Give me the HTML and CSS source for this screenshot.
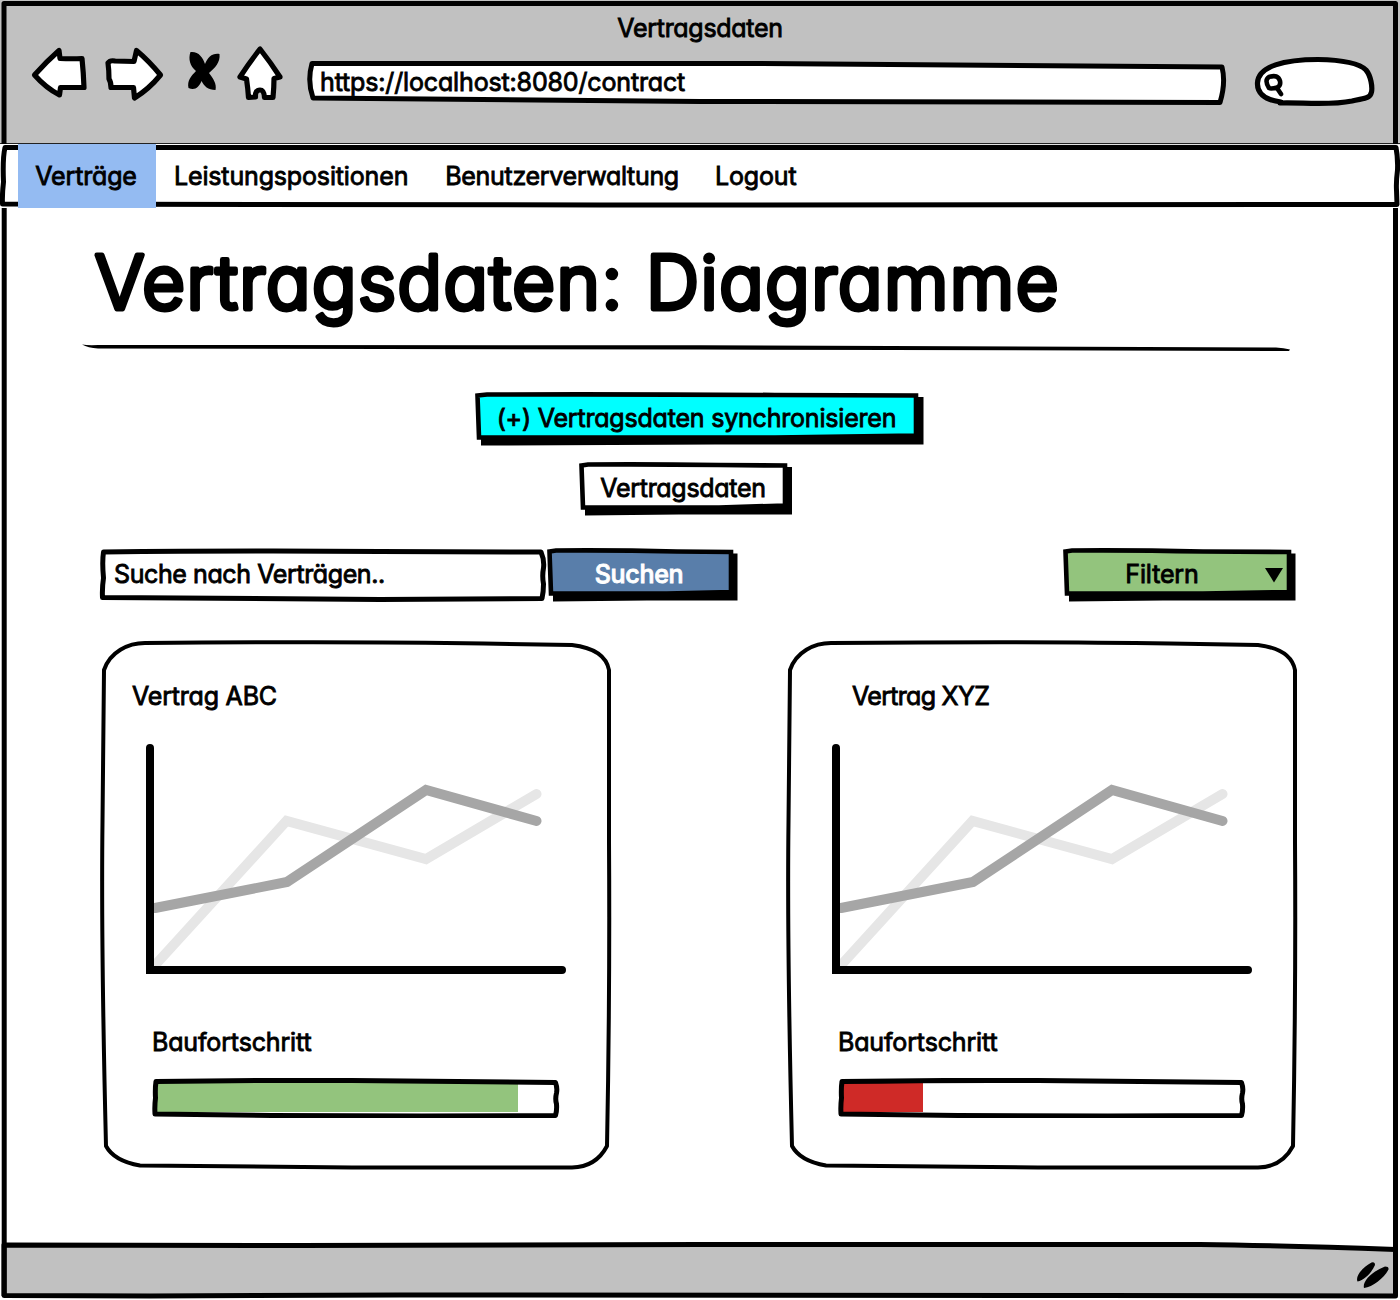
FILE: index.html
```html
<!DOCTYPE html>
<html lang="de">
<head>
<meta charset="utf-8">
<title>Vertragsdaten</title>
<link rel="stylesheet" href="styles.css">
</head>
<body>
<svg class="defs" aria-hidden="true">
  <symbol id="card-outline" viewBox="0 0 508 526" overflow="visible">
    <path class="line-card" d="M43 1 C150 0 300 0 382 1.500 L470 3 Q503 7 507 28 L507 200 Q508 350 505 504 Q494 525 470 525.500 L250 525.500 L38 523.500 Q12 519 4 504 Q-1 300 .5 180 L2 28 C8 10 26 1 43 1Z"/>
  </symbol>
  <symbol id="line-chart" viewBox="140 740 440 240">
    <path class="series series-light" d="M157 963 L286.500 821 L426 859 L536.500 794"/>
    <path class="series series-dark" d="M155 908 L287 882 L426 790 L536.500 821"/>
    <path class="axes" d="M150 748 V970 H562"/>
  </symbol>
  <symbol id="progress-outline" viewBox="0 0 408 40">
    <path class="line-thick" d="M4 3.500 Q110 2 200 2.500 L403.500 4.500 Q405.500 10 404.500 15 Q403 21 404.500 26 Q405 33 403.500 37.500 L270 38 L120 37.500 L3 36 Q2.500 28 3.500 20 Q3 10 4 3.500Z"/>
  </symbol>
</svg>

<div class="browser">
  <header class="chrome">
    <div class="window-title text">Vertragsdaten</div>
    <div class="toolbar">
      <svg width="66" height="62" viewBox="30 45 66 62"><path class="icon" d="M34.500 75 Q46 62 59 50.500 L60 58.500 Q72 59 82 58.500 Q83.500 73 84 87.500 Q72 87.500 60.500 87.500 L59.500 95 Q46 88 34.500 75Z"/></svg>
      <svg width="80" height="62" viewBox="96 45 80 62"><path class="icon" d="M108 63 Q110 60 115 61 L134 61.500 L136.500 50.500 Q149 61 160.500 75 Q149 89 134.500 98 L133.500 87.500 L111 87.500 Q111 82 109 79 Q109 70 108 63Z"/></svg>
      <svg width="54" height="62" viewBox="176 45 54 62"><path d="M190.500 52 C198 51 203 57 205 64 C208 57 212 53 219.500 54 C220.500 62 215 68 209 73 C213 78 217 84 215.500 90 C208 90 204 86 201.500 81 C199 87 195 91 188.500 88 C187 81 191 76 196 71 C190 66 188 59 190.500 52Z"/></svg>
      <svg width="70" height="62" viewBox="230 45 70 62"><path class="icon" d="M260 49 Q249 63 240 77 L246.500 79 Q248 89 248.500 97.500 L255.500 97 Q255 90 260 90 Q264 90 264.500 97.500 L273 97.500 Q274 87 274 78.500 L280 77 Q271 63 260 49Z"/></svg>
      <div class="address">
        <svg class="sketch" viewBox="300 45 940 62"><path class="line-thick fill-white" d="M312 63.500 Q540 62.500 760 63.500 L1222 67 Q1226 83 1220 102.500 L700 101.500 L313 98 Q307 81 312 63.500Z"/></svg>
        <span class="text address-text">https://localhost:8080/contract</span>
      </div>
      <svg width="150" height="62" viewBox="1240 45 150 62">
        <path class="icon" d="M1281 102 C1263 100 1257 92 1257.500 83 C1258 66 1285 59.500 1318 59.500 C1346 60 1360 64 1366 70 C1371 76 1372.500 87 1371.500 92 C1370 99 1364 98 1352 101 C1328 106 1300 102 1280 103"/>
        <path class="icon icon-glass" d="M1269 88 Q1264 80 1269 77 Q1278 74 1280 81 Q1281 86 1277 87.500 Q1271 89 1269 88Z M1277 88 L1281 94"/>
      </svg>
    </div>
  </header>

  <nav class="nav">
    <svg class="sketch" viewBox="0 144 1400 64">
      <path class="chrome-seam" d="M700 144.500 H1400"/>
      <path class="line-thick" d="M5 147.500 L500 147.500 L1396 147.500 Q1398 158 1397.500 170 Q1396 182 1396.500 190 L1397 204.500 L600 205 L2.500 204 Q2 195 3.500 182 Q2.500 158 5 147.500Z"/>
    </svg>
    <a class="text nav-item active">Verträge</a>
    <a class="text nav-item">Leistungspositionen</a>
    <a class="text nav-item tight">Benutzerverwaltung</a>
    <a class="text nav-item">Logout</a>
  </nav>

  <main class="content">
    <h1 class="headline"><svg width="1100" height="100" viewBox="90 240 1100 100" overflow="visible"><text class="headline-text" x="94.800" y="308.700">Vertragsdaten: Diagramme</text></svg></h1>
    <svg class="rule" width="1210" height="12" viewBox="82 341 1210 12"><path d="M82 344.500 Q88 345.500 98 345 L700 345.300 L1276 347.500 Q1284 348 1290 349.500 L1289 351 L1276 351 L700 349.500 L98 348.500 Q88 348 82 344.500Z"/></svg>

    <div class="actions">
      <button class="btn btn-sync">
        <svg class="sketch" viewBox="0 0 443 53"><path d="M6 12 V53.500 L240 52.500 H448.500 V5 H438Z"/><path class="line-btn fill-cyan" d="M2.500 3.500 L12 2.500 Q150 2 300 3 L441 3.500 V43.500 L300 45.500 L4 45.500Z"/></svg>
        <span class="text">(+) Vertragsdaten synchronisieren</span>
      </button>
      <button class="btn btn-data">
        <svg class="sketch" viewBox="0 0 208 53"><path d="M6 12 V53.500 L100 52.500 H213 V5 H202Z"/><path class="line-btn fill-white" d="M2.500 3.500 L9 2.500 Q70 2 140 3 L206 3.500 V43.500 L140 45.500 L4 45.500Z"/></svg>
        <span class="text">Vertragsdaten</span>
      </button>
    </div>

    <div class="search-row">
      <div class="field">
        <svg class="sketch" viewBox="0 0 446 53"><path class="line-thick fill-white" d="M3.500 4 Q150 2.500 280 3.500 L441 4 Q444.500 12 443.500 20 Q442 28 443.500 36 Q443.500 44 442 50.500 L280 51.500 L2.500 49.500 Q2 40 3.500 30 Q2 14 3.500 4Z"/></svg>
        <span class="text field-text">Suche nach Verträgen..</span>
      </div>
      <button class="btn btn-search">
        <svg class="sketch" viewBox="0 0 186 53"><path d="M6 12 V53.500 L100 52.500 H190.500 V5.500 H180Z"/><path class="line-btn fill-blue" d="M2.500 3.500 L9 2.500 Q70 2 130 3.500 L184 4 V44 L120 45.500 L4 45.500Z"/></svg>
        <span class="text search-label">Suchen</span>
      </button>
      <button class="btn btn-filter">
        <svg class="sketch" viewBox="0 0 228 53"><path d="M6 12 V53.500 L100 52.500 H232.500 V5.500 H222Z"/><path class="line-btn fill-green" d="M2.500 3.500 L9 2.500 Q70 2 140 3.500 L226 4 V44 L140 45.500 L4 45.500Z"/><path d="M202 20 H220 L211 34.500Z"/></svg>
        <span class="text filter-label">Filtern</span>
      </button>
    </div>

    <div class="cards">
      <section class="card">
        <svg class="sketch"><use href="#card-outline"/></svg>
        <h2 class="text card-title">Vertrag ABC</h2>
        <svg class="chart" width="440" height="240"><use href="#line-chart"/></svg>
        <div class="text card-label">Baufortschritt</div>
        <div class="progress">
          <div class="bar bar-green" style="width:90.6%"></div>
          <svg class="sketch"><use href="#progress-outline"/></svg>
        </div>
      </section>
      <section class="card">
        <svg class="sketch"><use href="#card-outline"/></svg>
        <h2 class="text card-title indented">Vertrag XYZ</h2>
        <svg class="chart" width="440" height="240"><use href="#line-chart"/></svg>
        <div class="text card-label">Baufortschritt</div>
        <div class="progress">
          <div class="bar bar-red" style="width:20%"></div>
          <svg class="sketch"><use href="#progress-outline"/></svg>
        </div>
      </section>
    </div>
  </main>

  <footer class="status">
    <svg class="sketch" viewBox="0 1240 1400 60">
      <path class="line-thick fill-grey" d="M4 1245 L300 1245.500 L700 1244.500 L1200 1244.500 Q1280 1245.500 1395.500 1249.500 V1296 L1100 1295.500 L400 1295 L150 1296 L4 1295.500Z"/>
      <path d="M1357.500 1281.500 C1355 1276 1363 1267 1371.500 1262.500 Q1375 1261.500 1375 1265 C1372 1272 1365 1280 1357.500 1281.500Z M1364 1288 C1362 1281 1373 1271 1385 1266.500 Q1389 1266.500 1388.500 1269.500 C1384 1278 1373 1287 1364 1288Z"/>
    </svg>
  </footer>

  <svg class="window-frame" viewBox="0 0 1400 1300">
    <path class="line-thick" d="M4 144 V3.500 H1395.500 V144"/>
    <path class="line-thick" d="M4.200 208 V1296 M1395.500 208 V1296"/>
  </svg>
</div>
</body>
</html>
```
FILE: styles.css
```css
* { box-sizing: border-box; }
body { margin: 0; background: #fff; color: #000; }
.defs { position: absolute; width: 0; height: 0; }

.browser {
  position: relative;
  display: flex;
  flex-direction: column;
  width: 1400px;
  height: 1300px;
  overflow: hidden;
  font-family: Inter, "Noto Sans", sans-serif;
  font-size: 25px;
  line-height: 30px;
  font-feature-settings: "cv11";
}
.text {
  font-weight: 400;
  letter-spacing: -0.15px;
  white-space: nowrap;
  -webkit-text-stroke: 0.85px currentColor;
}

/* Hand-drawn outlines lie behind the content of their box */
.sketch { position: absolute; inset: 0; width: 100%; height: 100%; overflow: visible; }
.window-frame { position: absolute; inset: 0; width: 1400px; height: 1300px; pointer-events: none; }
.line-thick { fill: none; stroke: #000; stroke-width: 5; stroke-linejoin: round; }
.line-card { fill: #fff; stroke: #000; stroke-width: 4; stroke-linejoin: round; }
.line-btn { stroke: #000; stroke-width: 4.6; }
.fill-white { fill: #fff; }
.fill-cyan { fill: #00ffff; }
.fill-blue { fill: #597eaa; }
.fill-green { fill: #93c47d; }
.fill-grey { fill: #c1c1c1; }

.chrome { height: 144px; padding-top: 13px; background: #c1c1c1; border-bottom: 1px solid #222; }
.window-title { height: 32px; text-align: center; letter-spacing: -0.3px; }
.toolbar { display: flex; padding-left: 30px; }
.icon { fill: #fff; stroke: #000; stroke-width: 5.2; stroke-linejoin: round; stroke-linecap: round; }
.icon-glass { stroke-width: 4.6; }
.address { position: relative; width: 940px; padding: 22px 0 0 20px; }
.address-text { position: relative; }

.nav { position: relative; display: flex; align-items: center; height: 64px; padding-left: 18px; }
.chrome-seam { stroke: #e4e4e4; stroke-width: 1; }
.nav-item { position: relative; margin-right: 36px; }
.nav-item.active {
  width: 138px;
  margin-right: 18px;
  padding-right: 2px;
  line-height: 64px;
  text-align: center;
  background: #94bbf2;
}
.nav-item.tight { letter-spacing: -0.3px; }
.nav-item:nth-of-type(2) { margin-right: 37px; }

.content { flex: 1; display: flex; flex-direction: column; padding-left: 82px; }
.headline { height: 101px; margin: 32px 0 0 8px; line-height: 100px; }
.headline svg { display: block; }
.headline-text {
  font-size: 73.8px;
  font-weight: 300;
  letter-spacing: 1.5px;
  stroke: #000;
  stroke-width: 4.8;
  stroke-linejoin: round;
}
.rule { flex: none; }

.btn { position: relative; height: 53px; padding: 11px 0 12px; border: 0; background: none; font: inherit; color: #000; font-feature-settings: inherit; }
.btn .text { position: relative; display: block; }
.actions { display: flex; flex-direction: column; gap: 17px; margin-top: 39px; }
.btn-sync { width: 443px; margin-left: 393px; }
.btn-data { width: 208px; margin-left: 497px; }
.btn-sync .text { letter-spacing: -0.2px; }
.btn-data .text { letter-spacing: -0.3px; }

.search-row { display: flex; width: 1209px; margin-top: 33px; padding-left: 18px; }
.field { position: relative; width: 446px; height: 53px; padding: 11px 0 0 14px; }
.field-text { position: relative; letter-spacing: -0.4px; }
.btn-search { width: 186px; margin-left: 1px; color: #fff; }
.btn .search-label { font-weight: 500; letter-spacing: -0.3px; padding-right: 2px; }
.btn-filter { width: 228px; margin-left: auto; }
.filter-label { padding-right: 30px; }

.cards { display: flex; gap: 178px; margin-top: 41px; padding-left: 20px; }
.card { position: relative; display: flex; flex-direction: column; width: 508px; height: 526px; padding: 39px 0 0 29px; }
.card > :not(.sketch) { position: relative; }
.card-title { margin: 0; padding-left: 1px; font-size: inherit; letter-spacing: -0.2px; }
.card-title.indented { padding-left: 35px; letter-spacing: -0.7px; }
.chart { margin: 29px 0 47px 9px; }
.series { fill: none; stroke-width: 10; stroke-linecap: round; }
.series-light { stroke: #e6e6e6; }
.series-dark { stroke: #a6a6a6; }
.axes { fill: none; stroke: #000; stroke-width: 8; stroke-linecap: round; }
.card-label { padding-left: 21px; }
.progress { width: 408px; height: 40px; margin: 21px 0 0 21px; padding: 5px 4px 6px 5px; }
.bar { height: 29px; }
.bar-green { background: #93c47d; }
.bar-red { background: #cf2a27; }

.status { position: relative; height: 60px; }
```
